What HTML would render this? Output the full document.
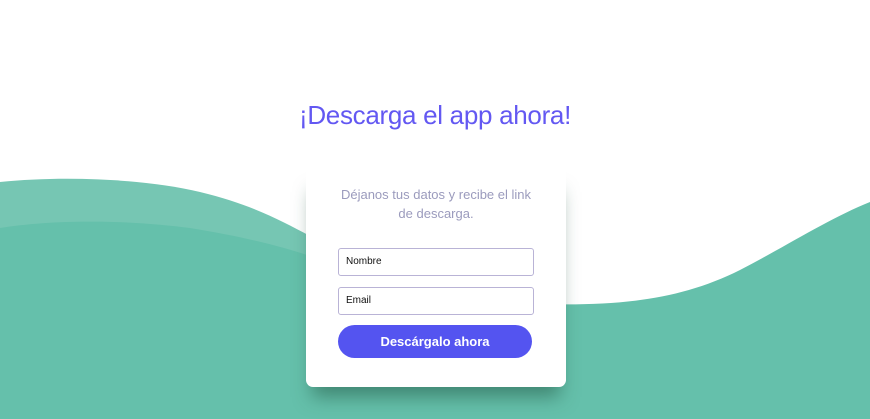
<!DOCTYPE html>
<html><head><meta charset="utf-8"><style>
html,body{margin:0;padding:0;width:870px;height:419px;overflow:hidden;background:#fff;font-family:"Liberation Sans",sans-serif;position:relative}
svg{position:absolute;left:0;top:0}
h1{position:absolute;left:0;width:870px;top:100px;margin:0;text-align:center;font-weight:normal;font-size:26px;color:#6358f2;letter-spacing:-0.3px}
.card{position:absolute;left:306px;top:170px;width:260px;height:217px;background:#fff;border-radius:0 0 7px 7px;box-shadow:0 16px 18px -6px rgba(30,80,60,.5)}
.sub{position:absolute;left:0;width:260px;top:15px;text-align:center;font-size:13px;line-height:19px;color:#9b9bbd}
.in{position:absolute;left:32px;width:196px;height:28px;border:1px solid #b9b3d6;border-radius:3px;box-sizing:border-box;font-size:10px;padding-left:7px;line-height:26px;color:#111}
.btn{position:absolute;left:32px;top:155px;width:194px;height:33px;border-radius:17px;background:#5454f0;color:#fff;text-align:center;line-height:33px;font-size:13px;font-weight:bold}
</style></head><body>
<svg width="870" height="419" viewBox="0 0 870 419">
<path d="M0 182 C60 176 140 178 200 192 C250 204 280 220 310 236 L310 419 L0 419Z" fill="#76c6b3"/>
<path d="M0 228 C50 220 120 219 190 228 C240 236 280 246 310 256 L310 419 L0 419Z" fill="#65c0ab"/>
<path d="M540 304 C620 306 680 300 740 270 C790 244 830 218 870 202 L870 419 L540 419Z" fill="#65c0ab"/>
<rect x="300" y="310" width="250" height="109" fill="#65c0ab"/>
</svg>
<h1>¡Descarga el app ahora!</h1>
<div class="card">
<div class="sub">Déjanos tus datos y recibe el link<br>de descarga.</div>
<div class="in" style="top:78px">Nombre</div>
<div class="in" style="top:117px">Email</div>
<div class="btn">Descárgalo ahora</div>
</div>
</body></html>
